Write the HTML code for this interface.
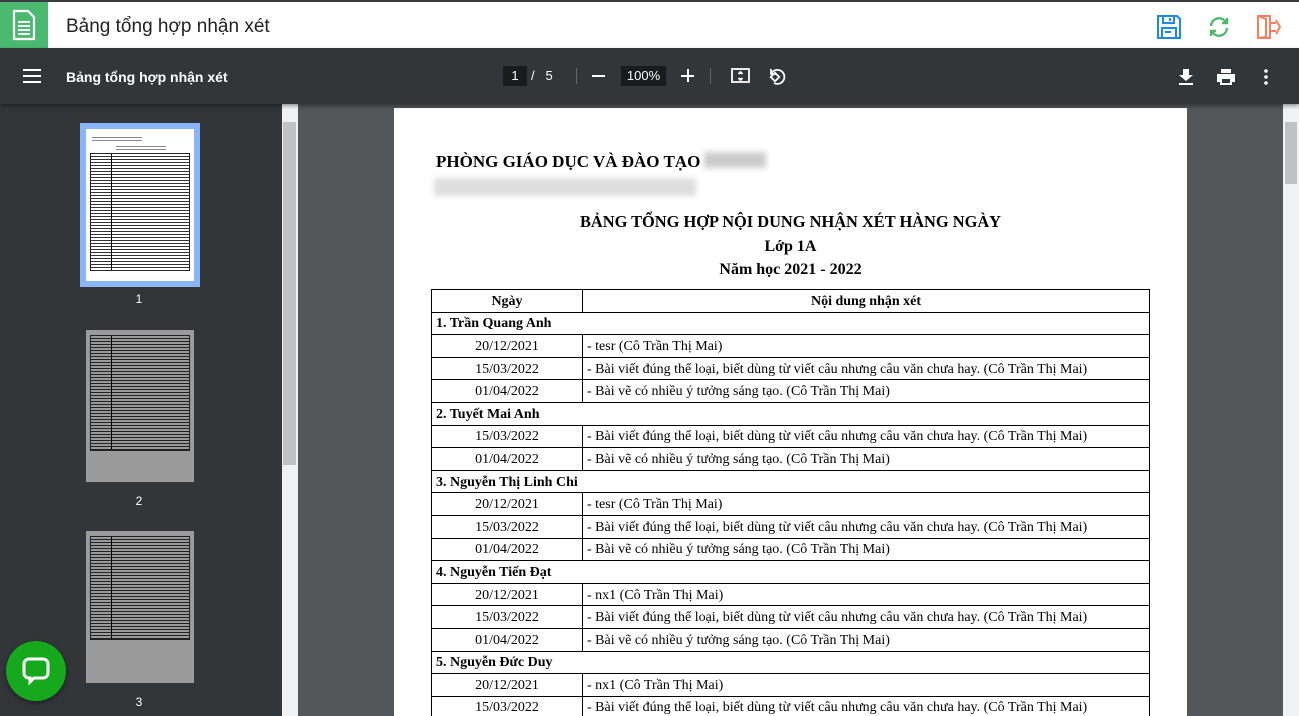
<!DOCTYPE html>
<html><head><meta charset="utf-8"><style>
*{margin:0;padding:0;box-sizing:border-box}
html,body{width:1299px;height:716px;overflow:hidden}
body{background:#525659;font-family:"Liberation Sans",sans-serif;position:relative}
.top{position:absolute;left:0;top:0;width:1299px;height:48px;background:#fff;border-top:2px solid #3a3d40}
.gicon{position:absolute;left:0;top:0;width:48px;height:46px;background:#4bb96f}
.ttl{position:absolute;left:66px;top:14px;font-size:19px;color:#222}
.bar{position:absolute;left:0;top:48px;width:1299px;height:56px;background:#323639;color:#fff;box-shadow:0 2px 4px rgba(0,0,0,.4);z-index:2}
.side{position:absolute;left:0;top:104px;width:282px;height:612px;background:#323639}
.sb{position:absolute;top:104px;width:16px;height:612px;background:#f1f1f1}
.thumb{position:absolute;left:86px;width:108px;height:152px;background:#fff}
.thumb .c{position:absolute;left:4px;top:24px;width:100px;height:118px;border:1px solid #222;background:repeating-linear-gradient(#fff 0 2px,#333 2px 3px)}
.thumb .c:after{content:"";position:absolute;left:20px;top:0;bottom:0;width:1px;background:#000}
.lbl{position:absolute;width:20px;left:129px;text-align:center;color:#fff;font-size:12px}
.page{position:absolute;left:394px;top:108px;width:793px;height:608px;overflow:hidden;background:#fff;font-family:"Liberation Serif",serif;color:#000}
table{position:absolute;left:37px;top:181px;width:719px;border-collapse:collapse;font-size:14px}
td{border:1px solid #000;height:22.6px;padding:2px 4px 0;line-height:18px}
td.d{text-align:center;width:151px}
.b{font-weight:bold}
</style></head><body>
<div class="top">
 <div class="gicon"><svg width="48" height="46" viewBox="0 0 48 46"><path d="M14 9h14l6 6v22H14z" fill="none" stroke="#fff" stroke-width="2.2"/><path d="M18 20h12M18 24h12M18 28h12M18 32h12" stroke="#fff" stroke-width="2"/></svg></div>
 <div class="ttl">Bảng tổng hợp nhận xét</div>
 <svg style="position:absolute;left:1156px;top:12px" width="26" height="26" viewBox="0 0 26 26" fill="none" stroke="#1e88e5" stroke-width="2"><path d="M2 2h19l3 3v19H2z"/><path d="M7 2v7h11V2M14 4v3M6 14h14v10H6zM9 18h6"/></svg>
 <svg style="position:absolute;left:1206px;top:12px" width="26" height="26" viewBox="0 0 26 26" fill="none" stroke="#4cba6a" stroke-width="2.4"><path d="M5 12a8 8 0 0 1 14-5l2 2M21 4v5h-5M21 14a8 8 0 0 1-14 5l-2-2M5 22v-5h5"/></svg>
 <svg style="position:absolute;left:1256px;top:12px" width="26" height="26" viewBox="0 0 26 26" fill="none" stroke="#f4805e" stroke-width="2"><path d="M2 2h12v22H2zM2 2l8 3v18l-8 1M14 9h6M20 6l4 7-4 7M14 17h6"/></svg>
</div>
<div class="bar">
 <svg style="position:absolute;left:23px;top:21px" width="18" height="14"><path d="M0 1h18M0 7h18M0 13h18" stroke="#fff" stroke-width="2"/></svg>
 <div style="position:absolute;left:66px;top:21px;font-size:14px;font-weight:bold">Bảng tổng hợp nhận xét</div>
 <div style="position:absolute;left:503px;top:18px;width:24px;height:20px;background:#191b1c;font-size:13px;text-align:center;line-height:20px">1</div>
 <div style="position:absolute;left:531px;top:20px;font-size:13px">/&nbsp;&nbsp;&nbsp;5</div>
 <div style="position:absolute;left:576px;top:20px;width:1px;height:16px;background:#666"></div>
 <div style="position:absolute;left:592px;top:27px;width:13px;height:2px;background:#fff"></div>
 <div style="position:absolute;left:621px;top:18px;width:45px;height:20px;background:#191b1c;font-size:13px;text-align:center;line-height:20px">100%</div>
 <div style="position:absolute;left:681px;top:27px;width:13px;height:2px;background:#fff"></div>
 <div style="position:absolute;left:687px;top:21px;width:2px;height:13px;background:#fff"></div>
 <div style="position:absolute;left:710px;top:20px;width:1px;height:16px;background:#666"></div>
 <svg style="position:absolute;left:731px;top:19px" width="20" height="18" fill="none" stroke="#fff" stroke-width="1.8"><rect x="1" y="2" width="17" height="13"/><path d="M9.5 5v2M7.5 7l2-2 2 2M9.5 13v-2M7.5 11l2 2 2-2"/></svg>
 <svg style="position:absolute;left:767px;top:18px" width="20" height="20" fill="none" stroke="#fff" stroke-width="1.8"><path d="M4 8a7 7 0 1 1 3 9M4 3v5h5"/><rect x="5" y="8" width="6" height="6" transform="rotate(45 8 11)"/></svg>
 <svg style="position:absolute;left:1179px;top:21px" width="14" height="16" fill="#fff"><path d="M4 0h6v6h4l-7 6-7-6h4zM0 14h14v2H0z"/></svg>
 <svg style="position:absolute;left:1217px;top:21px" width="18" height="16" fill="#fff"><path d="M4 0h10v4H4z"/><path d="M0 5h18v8h-3v3H3v-3H0z"/><rect x="5" y="10" width="8" height="4" fill="#323639"/></svg>
 <svg style="position:absolute;left:1263px;top:21px" width="6" height="16" fill="#fff"><circle cx="3" cy="2" r="1.8"/><circle cx="3" cy="8" r="1.8"/><circle cx="3" cy="14" r="1.8"/></svg>
</div>
<div class="side">
 <div style="position:absolute;left:80px;top:19px;width:120px;height:164px;background:#8ab4f8"></div>
 <div class="thumb" style="top:25px"><div style="position:absolute;left:6px;top:6px;width:50px;height:6px;background:repeating-linear-gradient(#fff 0 2px,#888 2px 3px)"></div><div style="position:absolute;left:30px;top:15px;width:50px;height:6px;background:repeating-linear-gradient(#fff 0 2px,#888 2px 3px)"></div><div class="c"></div></div>
 <div class="lbl" style="top:188px">1</div>
 <div class="thumb" style="top:226px;background:#9a9a9a"><div class="c" style="top:5px;height:116px;background:repeating-linear-gradient(#9a9a9a 0 2px,#222 2px 3px)"></div></div>
 <div class="lbl" style="top:390px">2</div>
 <div class="thumb" style="top:427px;background:#9a9a9a"><div class="c" style="top:5px;height:104px;background:repeating-linear-gradient(#9a9a9a 0 2px,#222 2px 3px)"></div></div>
 <div class="lbl" style="top:591px">3</div>
</div>
<div class="sb" style="left:282px"><div style="position:absolute;left:1px;top:18px;width:13px;height:343px;background:#c1c1c1"></div></div>
<div class="sb" style="left:1283px"><div style="position:absolute;left:2px;top:18px;width:12px;height:62px;background:#c1c1c1"></div></div>
<div class="page">
 <div class="b" style="position:absolute;left:42px;top:44px;font-size:17px">PHÒNG GIÁO DỤC VÀ ĐÀO TẠO</div>
 <div style="position:absolute;left:310px;top:44px;width:62px;height:16px;background:#ccc;filter:blur(3px)"></div>
 <div style="position:absolute;left:40px;top:70px;width:262px;height:18px;background:#ddd;filter:blur(3px)"></div>
 <div class="b" style="position:absolute;left:0;width:793px;text-align:center;top:104px;font-size:16.4px">BẢNG TỔNG HỢP NỘI DUNG NHẬN XÉT HÀNG NGÀY</div>
 <div class="b" style="position:absolute;left:0;width:793px;text-align:center;top:130px;font-size:16px">Lớp 1A</div>
 <div class="b" style="position:absolute;left:0;width:793px;text-align:center;top:153px;font-size:16px">Năm học 2021 - 2022</div>
 <table>
 <tr><td class="d b">Ngày</td><td class="b" style="text-align:center">Nội dung nhận xét</td></tr>
 <tr><td colspan="2" class="b">1. Trần Quang Anh</td></tr>
 <tr><td class="d">20/12/2021</td><td>- tesr (Cô Trần Thị Mai)</td></tr>
 <tr><td class="d">15/03/2022</td><td>- Bài viết đúng thể loại, biết dùng từ viết câu nhưng câu văn chưa hay. (Cô Trần Thị Mai)</td></tr>
 <tr><td class="d">01/04/2022</td><td>- Bài vẽ có nhiều ý tưởng sáng tạo. (Cô Trần Thị Mai)</td></tr>
 <tr><td colspan="2" class="b">2. Tuyết Mai Anh</td></tr>
 <tr><td class="d">15/03/2022</td><td>- Bài viết đúng thể loại, biết dùng từ viết câu nhưng câu văn chưa hay. (Cô Trần Thị Mai)</td></tr>
 <tr><td class="d">01/04/2022</td><td>- Bài vẽ có nhiều ý tưởng sáng tạo. (Cô Trần Thị Mai)</td></tr>
 <tr><td colspan="2" class="b">3. Nguyễn Thị Linh Chi</td></tr>
 <tr><td class="d">20/12/2021</td><td>- tesr (Cô Trần Thị Mai)</td></tr>
 <tr><td class="d">15/03/2022</td><td>- Bài viết đúng thể loại, biết dùng từ viết câu nhưng câu văn chưa hay. (Cô Trần Thị Mai)</td></tr>
 <tr><td class="d">01/04/2022</td><td>- Bài vẽ có nhiều ý tưởng sáng tạo. (Cô Trần Thị Mai)</td></tr>
 <tr><td colspan="2" class="b">4. Nguyễn Tiến Đạt</td></tr>
 <tr><td class="d">20/12/2021</td><td>- nx1 (Cô Trần Thị Mai)</td></tr>
 <tr><td class="d">15/03/2022</td><td>- Bài viết đúng thể loại, biết dùng từ viết câu nhưng câu văn chưa hay. (Cô Trần Thị Mai)</td></tr>
 <tr><td class="d">01/04/2022</td><td>- Bài vẽ có nhiều ý tưởng sáng tạo. (Cô Trần Thị Mai)</td></tr>
 <tr><td colspan="2" class="b">5. Nguyễn Đức Duy</td></tr>
 <tr><td class="d">20/12/2021</td><td>- nx1 (Cô Trần Thị Mai)</td></tr>
 <tr><td class="d">15/03/2022</td><td>- Bài viết đúng thể loại, biết dùng từ viết câu nhưng câu văn chưa hay. (Cô Trần Thị Mai)</td></tr>
 </table>
</div>
<div style="position:absolute;left:6px;top:641px;width:60px;height:60px;border-radius:50%;background:#17a91d;box-shadow:0 2px 5px rgba(0,0,0,.4)">
 <svg style="position:absolute;left:16px;top:16px" width="28" height="28" fill="none" stroke="#fff" stroke-width="3"><path d="M7 2h14a5 5 0 0 1 5 5v9a5 5 0 0 1-5 5H12l-4 4v-4H7a5 5 0 0 1-5-5V7a5 5 0 0 1 5-5z"/></svg>
</div>
</body></html>
